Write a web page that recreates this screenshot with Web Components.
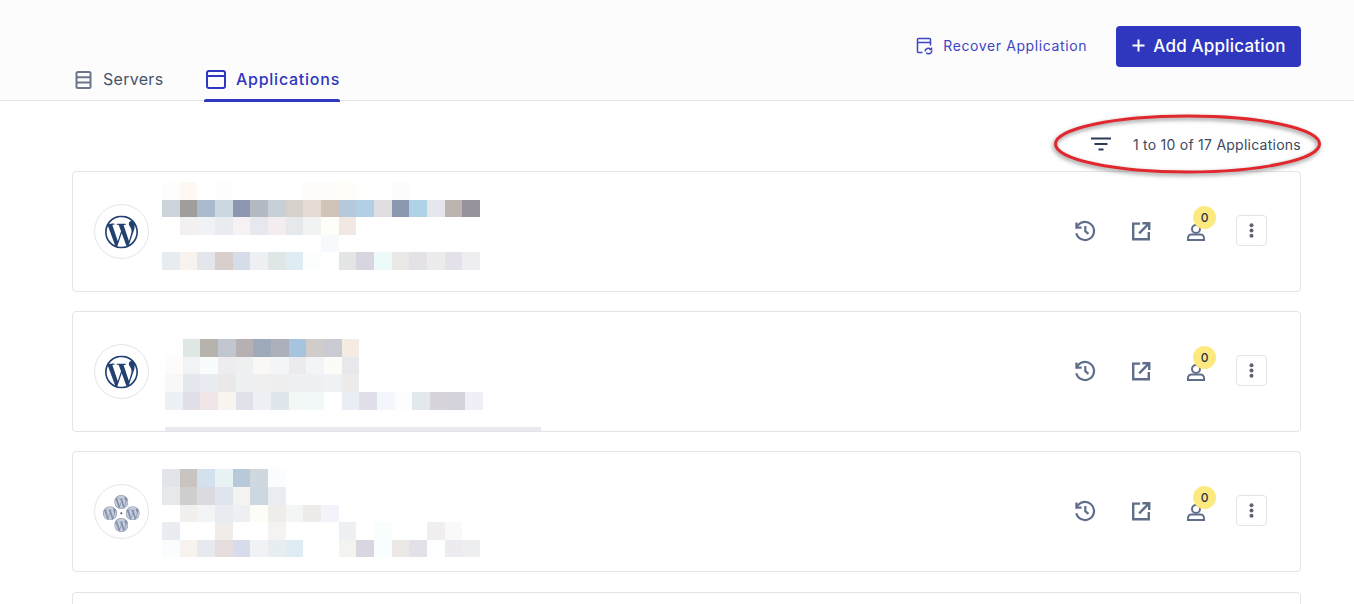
<!DOCTYPE html>
<html>
<head>
<meta charset="utf-8">
<title>Applications</title>
<style>
  html, body { margin: 0; height: 100%; overflow: hidden; background: #fff; }
  body { position: relative; font-family: Inter, "Open Sans", sans-serif; color: #3c4a60; }
  .cards { display: flex; flex-direction: column; gap: 19.2px; height: 433px; overflow: hidden; padding: 0 53px 0 72px; }
</style>
</head>
<body>
<top-bar>
  <nav-tab slot="tabs" icon="servers">Servers</nav-tab>
  <nav-tab slot="tabs" icon="window" active>Applications</nav-tab>
</top-bar>
<list-toolbar>1 to 10 of 17 Applications</list-toolbar>
<div class="cards">
  <app-card logo="wp" mosaic-top="10" mosaic-left="0">
    <blur-mosaic rows="fdfdfd,fdf8f2,,fcfdfe,,,,,fefcf9,fefcf8,fefdf8,fefefc,,fbfcfe|cdd4dc,a09d9d,aabbcd,ccd9e1,8e96b0,b4bac2,c8d0d7,d6d1ca,e4dbd4,d0c4b8,b6c8dc,b2cfe6,e0dee0,8a99b0,b0d2e7,e6e7ec,bdb4b0,96939d|,f3f0f1,f0f2f6,e8ecf1,f6f1f3,e7e8ee,f3edef,e5e9ec,f0f3f2,fefef8,f2e8e3|,,,,,,,,,f6fafd|e7ecf1,f8f3ee,e5e6ec,d8cfcc,d6dce8,eff0f3,dee6e6,dfecf3,fcfefd,,e3e6e5,d8d5e0,edfafa,e9e8e6,e4e1e7,ececed,e5e1ea,eeeef0"></blur-mosaic>
  </app-card>
  <app-card logo="wp" mosaic-top="27" mosaic-left="3">
    <blur-mosaic bar rows="fefefc,dfe7e5,b6b2ac,c2c6ce,b6b0b3,9ea9ba,acb0ba,a6c4de,d0ccc9,cacad2,f4ece3|fdfcfa,f2f3f4,f8fcfd,eeecee,eeeff1,faf8f5,f2f6f9,ebebed,f3f4f6,fbfcf8,e7e8ec|f8f8f8,e5e7ef,e9edf2,ebe8ea,eef1f4,efefef,eeeeee,edf1f2,eff0f3,eff1f3,edecea|edf1f5,e1dfe8,efe4e6,f8f4ef,dfe1eb,edf0f5,dfe7ec,f3f7f6,f2f7f9,,ebedf4,e1e0ea,f3f7fb,fdfdfe,e3e8ec,d9d4dc,d4d3db,f0eff7"></blur-mosaic>
  </app-card>
  <app-card logo="multi" mosaic-top="17" mosaic-left="0">
    <blur-mosaic rows="e1e4e8,c9c4c0,d3e1ee,e9f2f5,b8c9da,d0d8df,f9fdfd|e6e8ec,cfcfcf,dbdae0,dfe6ee,f4f3f1,ccd7e2,eaedf1|,f2f0ee,f3f4f5,e8ebf0,eeeff2,fcfdf6,f0ecea,f4f6f5,efebe8,f3f4fa|e9ecf1,,,efecea,,,f4f3f1,,,,edf1f1,,f8fefe,fdfefe,,f0eeef,f9f9f9|fafdfe,f9f3ef,e8e9ee,e6dede,d8dcea,f1f2f5,e8edf0,dfecf4,fefefe,,f3f4ef,d9d6e1,f8fdfd,ece8e5,e3e1e7,fdfefe,edebf0,edeef0"></blur-mosaic>
  </app-card>
  <app-card empty></app-card>
</div>
<call-out></call-out>

<script>
// logo path shared by the card avatars
const WP_PATH = "M21.469 6.825c.84 1.537 1.318 3.3 1.318 5.175 0 3.979-2.156 7.456-5.363 9.325l3.295-9.527c.615-1.54.82-2.771.82-3.864 0-.405-.026-.78-.07-1.11m-7.981.105c.647-.03 1.232-.105 1.232-.105.582-.075.514-.93-.067-.899 0 0-1.755.135-2.88.135-1.064 0-2.85-.15-2.85-.15-.585-.03-.661.855-.075.885 0 0 .54.061 1.125.09l1.68 4.605-2.37 7.08L5.354 6.9c.649-.03 1.234-.1 1.234-.1.585-.075.516-.93-.065-.896 0 0-1.746.138-2.874.138-.2 0-.438-.008-.69-.015C4.911 3.15 8.235 1.215 12 1.215c2.809 0 5.365 1.072 7.286 2.833-.046-.003-.091-.009-.141-.009-1.06 0-1.812.923-1.812 1.914 0 .89.513 1.643 1.06 2.531.411.72.89 1.643.89 2.977 0 .915-.354 2.025-.821 3.543l-1.075 3.585-3.9-11.61.001.014zM12 22.784c-1.059 0-2.081-.153-3.048-.437l3.237-9.406 3.315 9.087c.024.053.05.101.078.149-1.12.393-2.325.609-3.582.609M1.211 12c0-1.564.336-3.05.935-4.39L7.29 21.709C3.694 19.96 1.212 16.271 1.211 12M12 0C5.385 0 0 5.385 0 12s5.385 12 12 12 12-5.385 12-12S18.615 0 12 0";

const ICONS = {
  servers: `<svg width="19" height="19" viewBox="0 0 19 19" fill="none" stroke="#6b7689" stroke-width="2"><rect x="2.5" y="2" width="14" height="16" rx="1.5"/><path d="M2.5 7.3h14M2.5 12.6h14"/></svg>`,
  window: `<svg width="20" height="19" viewBox="0 0 20 19" fill="none" stroke="currentColor" stroke-width="2"><rect x="1" y="1" width="18" height="17" rx="2"/><path d="M1 6h18"/></svg>`,
};

class TopBar extends HTMLElement {
  constructor() {
    super();
    this.attachShadow({ mode: "open" });
  }
  connectedCallback() {
    this.shadowRoot.innerHTML = `
      <style>
        :host { display: block; height: 100px; background: #fcfcfd; border-bottom: 1px solid #e2e2e8; box-sizing: content-box; }
        .actions { display: flex; justify-content: flex-end; align-items: center; gap: 29px; padding: 26px 53px 0 0; height: 41px; }
        .recover { display: flex; align-items: center; gap: 9px; color: #3f46c4; font-size: 14px; letter-spacing: .6px; padding-bottom: 2px; }
        .add { display: flex; align-items: center; justify-content: center; gap: 7px; width: 185px; height: 41px; box-sizing: border-box; padding: 0 0 2px; background: #2f37bf; color: #fff; border: 0; border-radius: 4px; font: 500 17px Inter, sans-serif; letter-spacing: .2px; }
        .tabs { display: flex; gap: 41px; padding: 0 0 0 72px; height: 33px; }
      </style>
      <div class="actions">
        <span class="recover">
          <svg width="18" height="18" viewBox="0 0 18 18" fill="none" stroke="currentColor" stroke-width="1.5"><path d="M6.5 15.5H2.5a1 1 0 0 1-1-1v-12a1 1 0 0 1 1-1h11a1 1 0 0 1 1 1v6M1.5 5.5h13"/><path d="M9 14.5a3.4 3.4 0 0 1 5.8-2.2M16 13.5a3.4 3.4 0 0 1-5.8 2.2" stroke-width="1.4"/><path d="M15.6 10.4v2.3h-2.3" stroke-width="1.2"/></svg>
          Recover Application
        </span>
        <button class="add">
          <svg width="15" height="15" viewBox="0 0 15 15" stroke="currentColor" stroke-width="2"><path d="M7.5 1.5v12M1.5 7.5h12"/></svg>
          Add Application
        </button>
      </div>
      <div class="tabs"><slot name="tabs"></slot></div>`;
  }
}

class NavTab extends HTMLElement {
  constructor() {
    super();
    this.attachShadow({ mode: "open" });
  }
  connectedCallback() {
    this.shadowRoot.innerHTML = `
      <style>
        :host { display: flex; align-items: center; gap: 10px; height: 33px; padding: 0 0 9px 2px; box-sizing: border-box; font-size: 16px; letter-spacing: .3px; color: #44526b; position: relative; }
        :host([active]) { color: #2f37bf; font-weight: 500; letter-spacing: .75px; gap: 9.5px; }
        :host([active])::after { content: ""; position: absolute; left: 0; right: 0; bottom: -2px; height: 3px; background: #2f37bf; border-radius: 2px 2px 0 0; }
        svg { display: block; }
      </style>
      ${ICONS[this.getAttribute("icon")]}<span><slot></slot></span>`;
  }
}

class ListToolbar extends HTMLElement {
  constructor() {
    super();
    this.attachShadow({ mode: "open" });
  }
  connectedCallback() {
    this.shadowRoot.innerHTML = `
      <style>
        :host { display: flex; justify-content: flex-end; align-items: center; gap: 22px; height: 70px; box-sizing: border-box; padding: 16px 53px 0 0; font-size: 14px; letter-spacing: .25px; color: #3c4a60; }
      </style>
      <svg width="20" height="14" viewBox="0 0 20 14" stroke="#2b3a55" stroke-width="2"><path d="M0 1.5h20M3.5 7h13M7.5 12.5h5"/></svg>
      <span><slot></slot></span>`;
  }
}

class WpLogo extends HTMLElement {
  constructor() {
    super();
    this.attachShadow({ mode: "open" });
  }
  connectedCallback() {
    const multi = this.hasAttribute("multi");
    const inner = multi
      ? [[19.3, 10], [8, 21.3], [30.7, 21.3], [19.3, 33]]
          .map(([x, y]) => `<svg x="${x}" y="${y}" width="14" height="14" viewBox="0 0 24 24"><circle cx="12" cy="12" r="11" fill="#c6ccd9"/><path d="${WP_PATH}" fill="#8491ad"/></svg>`)
          .join("") + `<circle cx="26.3" cy="28.3" r="1" fill="#3d4a66"/>`
      : `<svg x="10" y="10.5" width="33" height="33" viewBox="0 0 24 24"><path d="${WP_PATH}" fill="#234170"/></svg>`;
    this.shadowRoot.innerHTML = `
      <style>
        :host { display: block; width: 55px; height: 55px; border: 1px solid #e3e3e9; border-radius: 50%; box-sizing: border-box; flex: none; }
        svg { display: block; }
      </style>
      <svg width="53" height="53" viewBox="0 0 53 53">${inner}</svg>`;
  }
}

class BlurMosaic extends HTMLElement {
  constructor() {
    super();
    this.attachShadow({ mode: "open" });
  }
  connectedCallback() {
    // each row is a comma list of hex colours, an empty entry stays white
    const rows = this.getAttribute("rows").split("|").map((r) => r.split(","));
    const cells = rows
      .map((row) =>
        Array.from({ length: 18 }, (_, i) =>
          `<i style="background:${row[i] ? "#" + row[i] : "transparent"}"></i>`
        ).join("")
      )
      .join("");
    this.shadowRoot.innerHTML = `
      <style>
        :host { display: block; }
        .grid { display: grid; grid-template-columns: repeat(18, 17.67px); grid-auto-rows: 17.6px; }
        .bar { height: 6px; width: 376px; margin-top: 17.6px; background: #e9eaef; }
      </style>
      <div class="grid">${cells}</div>
      ${this.hasAttribute("bar") ? `<div class="bar"></div>` : ""}`;
  }
}

class AppCard extends HTMLElement {
  constructor() {
    super();
    this.attachShadow({ mode: "open" });
  }
  connectedCallback() {
    if (this.hasAttribute("empty")) {
      this.shadowRoot.innerHTML = `
        <style>:host { display: block; flex: none; height: 121px; border: 1px solid #e3e3e9; border-radius: 4px; box-sizing: border-box; background: #fff; }</style>`;
      return;
    }
    const logo = this.getAttribute("logo") === "multi" ? `<wp-logo multi></wp-logo>` : `<wp-logo></wp-logo>`;
    this.shadowRoot.innerHTML = `
      <style>
        :host { display: flex; flex: none; position: relative; height: 121px; border: 1px solid #e3e3e9; border-radius: 4px; box-sizing: border-box; background: #fff; overflow: hidden; }
        .logo { display: flex; align-items: center; padding-left: 21px; flex: none; width: 55px; margin-right: 13px; }
        .mosaic { flex: 1; padding-top: ${this.getAttribute("mosaic-top")}px; padding-left: ${this.getAttribute("mosaic-left")}px; }
        .actions { display: flex; align-items: center; padding-right: 33px; color: #5f6f8a; }
        .ico { display: block; flex: none; }
        .hist { margin: -2px 33px 0 0; }
        .ext { margin: -1px 34.5px 0 0; }
        .user { position: relative; width: 18px; height: 18px; margin: 1px 31.5px 0 0; }
        .badge { position: absolute; left: 6.5px; top: -17px; width: 23px; height: 23px; border-radius: 50%; background: #fde97f; color: #2b3445; font-size: 12px; font-weight: 500; display: flex; align-items: center; justify-content: center; }
        .more { width: 31px; height: 31px; margin-top: -2px; border: 1px solid #e3e3e9; border-radius: 4px; box-sizing: border-box; display: flex; align-items: center; justify-content: center; }
      </style>
      <div class="logo">${logo}</div>
      <div class="mosaic"><slot></slot></div>
      <div class="actions">
        <svg class="ico hist" width="24" height="24" viewBox="0 0 24 24" fill="none" stroke="currentColor" stroke-width="2.2"><path d="M3.4 3.4v5.2h5.2"/><path d="M3.84 8.2A9 9 0 1 1 3.3 14.3"/><path d="M12.3 7V12.2l3.2 2.7"/></svg>
        <svg class="ico ext" width="22" height="22" viewBox="0 0 24 24" fill="none" stroke="currentColor" stroke-width="2.6"><path d="M11 4H3.5v17h17v-8"/><path d="M10 14.5L20.5 4M13.5 3.5h7.5V11"/></svg>
        <div class="user">
          <svg class="ico" width="18" height="18" viewBox="0 0 18 18" fill="none" stroke="currentColor" stroke-width="2"><circle cx="9" cy="6" r="4"/><path d="M1 17v-2a3.5 3.5 0 0 1 3.5-3.5h9A3.5 3.5 0 0 1 17 15v2z"/></svg>
          <span class="badge">0</span>
        </div>
        <div class="more"><svg width="5" height="15" viewBox="0 0 5 15" fill="#5f6070"><circle cx="2.5" cy="2.2" r="2"/><circle cx="2.5" cy="7.5" r="2"/><circle cx="2.5" cy="12.8" r="2"/></svg></div>
      </div>`;
  }
}

// red marker drawn over the screenshot, lies over the toolbar
class CallOut extends HTMLElement {
  constructor() {
    super();
    this.attachShadow({ mode: "open" });
  }
  connectedCallback() {
    this.shadowRoot.innerHTML = `
      <style>
        :host { display: block; position: absolute; left: 1050px; top: 110px; width: 276px; height: 68px; pointer-events: none; }
        svg { display: block; overflow: visible; filter: drop-shadow(-1px 2px 2px rgba(40,40,40,.55)); }
      </style>
      <svg width="276" height="68"><ellipse cx="137.5" cy="34" rx="132" ry="28" fill="none" stroke="#e0282e" stroke-width="3"/></svg>`;
  }
}

customElements.define("top-bar", TopBar);
customElements.define("nav-tab", NavTab);
customElements.define("list-toolbar", ListToolbar);
customElements.define("wp-logo", WpLogo);
customElements.define("blur-mosaic", BlurMosaic);
customElements.define("app-card", AppCard);
customElements.define("call-out", CallOut);
</script>
</body>
</html>
